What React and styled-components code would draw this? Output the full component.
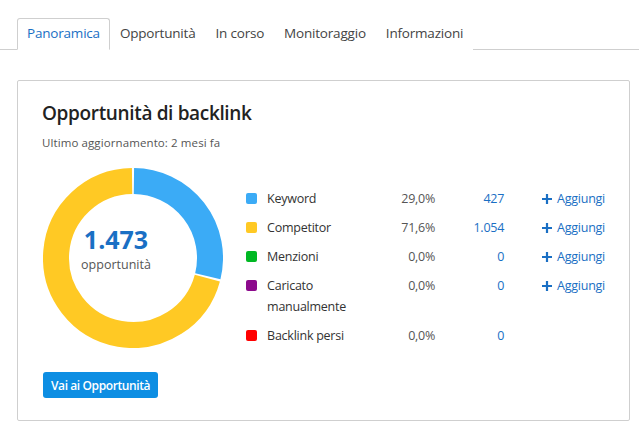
import React from "react";
import styled, { createGlobalStyle } from "styled-components";

const GlobalStyle = createGlobalStyle`
  body {
    margin: 0;
    background: #fff;
    font-family: "Open Sans", "Noto Sans", sans-serif;
    color: #333;
  }
`;

const Page = styled.div`
  padding-top: 18px;
`;

const Tabs = styled.div`
  display: flex;
  padding-left: 17px;
  border-bottom: 1px solid #cfcfcf;
`;

const Tab = styled.div`
  height: 30px;
  line-height: 29px;
  padding: 0 9px;
  font-size: 13.5px;
  letter-spacing: -0.2px;
  color: ${(p) => (p.active ? "#1a6fc4" : "#444")};
  border: 1px solid ${(p) => (p.active ? "#cfcfcf" : "transparent")};
  border-bottom-color: ${(p) => (p.active ? "#fff" : "transparent")};
  border-radius: 3px 3px 0 0;
  margin-bottom: -1px;
  background: #fff;
`;

const Card = styled.div`
  margin: 30px 9px 0 17px;
  border: 1px solid #cfcfcf;
  border-radius: 2px;
  padding: 19px 24px 23px 24px;
  height: 341px;
  box-sizing: border-box;
`;

const Title = styled.h2`
  margin: 0;
  font-size: 19px;
  line-height: 26px;
  font-weight: 600;
  letter-spacing: -0.35px;
  color: #222;
`;

const Updated = styled.div`
  margin-top: 9px;
  font-size: 11.5px;
  line-height: 16px;
  letter-spacing: 0.1px;
  color: #555;
`;

const Body = styled.div`
  display: flex;
  margin-top: 17px;
`;

const Left = styled.div`
  display: flex;
  flex-direction: column;
  align-items: flex-start;
  padding-left: 1px;
  width: 205px;
`;

const Donut = styled.div`
  position: relative;
  width: 180px;
  height: 180px;
`;

const CenterLabel = styled.div`
  position: absolute;
  left: 0;
  top: 56px;
  width: 146px;
  text-align: center;
`;

const Total = styled.div`
  font-size: 25px;
  line-height: 30px;
  font-weight: 700;
  color: #1a6fc4;
`;

const TotalCaption = styled.div`
  margin-top: 2px;
  font-size: 12.5px;
  color: #555;
`;

const Button = styled.button`
  margin-top: 24px;
  height: 26px;
  padding: 0 8px;
  border: none;
  border-radius: 3px;
  background: #0d8ee3;
  color: #fff;
  font-family: inherit;
  font-size: 12px;
  letter-spacing: -0.4px;
  font-weight: 600;
  cursor: pointer;
`;

const Legend = styled.div`
  padding-top: 16px;
`;

const Row = styled.div`
  display: grid;
  grid-template-columns: 21px 100px 68px 69px auto;
  align-items: start;
  padding: 4px 0;
  font-size: 12.5px;
  letter-spacing: -0.25px;
  line-height: 21px;
`;

const Swatch = styled.span`
  width: 11px;
  height: 11px;
  margin-top: 5px;
  border-radius: 2px;
  background: ${(p) => p.color};
`;

const Label = styled.span`
  color: #333;
`;

const Pct = styled.span`
  text-align: right;
  color: #555;
`;

const Count = styled.span`
  text-align: right;
  color: #1a6fc4;
`;

const Add = styled.a`
  display: flex;
  align-items: center;
  gap: 5px;
  height: 21px;
  padding-left: 38px;
  color: #1a6fc4;
  text-decoration: none;
  cursor: pointer;
`;

const rows = [
  { color: "#3babf6", label: "Keyword", pct: "29,0%", count: "427", add: true },
  { color: "#ffc924", label: "Competitor", pct: "71,6%", count: "1.054", add: true },
  { color: "#00b823", label: "Menzioni", pct: "0,0%", count: "0", add: true },
  { color: "#8c0a8c", label: "Caricato manualmente", pct: "0,0%", count: "0", add: true },
  { color: "#ff0000", label: "Backlink persi", pct: "0,0%", count: "0", add: false },
];

const arc = (cx, cy, r, a0, a1) => {
  const p = (a) => [cx + r * Math.sin(a), cy - r * Math.cos(a)];
  const [x0, y0] = p(a0);
  const [x1, y1] = p(a1);
  const large = a1 - a0 > Math.PI ? 1 : 0;
  return `M ${x0} ${y0} A ${r} ${r} 0 ${large} 1 ${x1} ${y1}`;
};

const DonutChart = () => {
  const split = 0.29 * Math.PI * 2;
  const gap = 0.012;
  return (
    <svg width="180" height="180" viewBox="0 0 180 180">
      <path d={arc(90, 90, 77, gap, split - gap)} stroke="#3babf6" strokeWidth="26" fill="none" />
      <path d={arc(90, 90, 77, split + gap, Math.PI * 2 - gap)} stroke="#ffc924" strokeWidth="26" fill="none" />
    </svg>
  );
};

const Plus = () => (
  <svg width="10" height="10" viewBox="0 0 10 10">
    <path d="M5 0v10M0 5h10" stroke="#1a6fc4" strokeWidth="2.2" />
  </svg>
);

const App = () => {
  return (
    <Page>
      <GlobalStyle />
      <Tabs>
        <Tab active>Panoramica</Tab>
        <Tab>Opportunità</Tab>
        <Tab>In corso</Tab>
        <Tab>Monitoraggio</Tab>
        <Tab>Informazioni</Tab>
      </Tabs>
      <Card>
        <Title>Opportunità di backlink</Title>
        <Updated>Ultimo aggiornamento: 2 mesi fa</Updated>
        <Body>
          <Left>
            <Donut>
              <DonutChart />
              <CenterLabel>
                <Total>1.473</Total>
                <TotalCaption>opportunità</TotalCaption>
              </CenterLabel>
            </Donut>
            <Button>Vai ai Opportunità</Button>
          </Left>
          <Legend>
            {rows.map((r) => (
              <Row key={r.label}>
                <Swatch color={r.color} />
                <Label>{r.label}</Label>
                <Pct>{r.pct}</Pct>
                <Count>{r.count}</Count>
                {r.add ? (
                  <Add>
                    <Plus />
                    Aggiungi
                  </Add>
                ) : (
                  <span />
                )}
              </Row>
            ))}
          </Legend>
        </Body>
      </Card>
    </Page>
  );
};

export default App;
